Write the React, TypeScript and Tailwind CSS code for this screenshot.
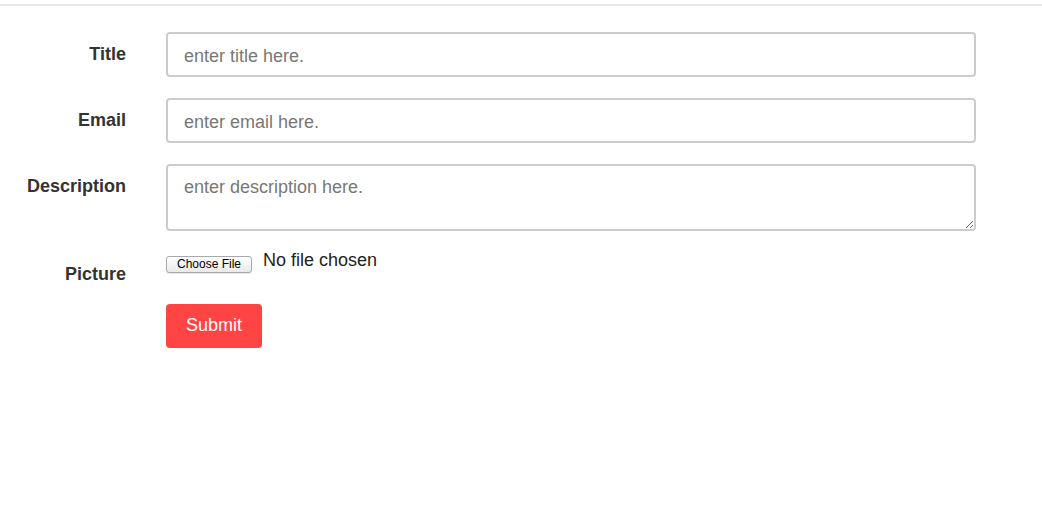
import React from 'react';

function Label({ children }: { children: React.ReactNode }) {
  return (
    <label className="pt-[10px] text-right text-[18px] leading-[1.42857] font-bold text-[#333]">
      {children}
    </label>
  );
}

export default function App() {
  return (
    <div className="min-h-[514px] bg-white font-['Liberation_Sans',Arial,sans-serif]">
      <div className="pt-[4px]">
        <div className="border-t-2 border-[#e7e7e7]" />
      </div>
      <form className="grid grid-cols-[126px_810px] gap-x-[40px] gap-y-[21px] pt-[26px]">
        <Label>Title</Label>
        <input
          type="text"
          placeholder="enter title here."
          className="h-[45px] rounded-[4px] border-2 border-[#cccccc] pl-[16px] pt-[3px] text-[18px] text-[#333] placeholder:text-[#777] outline-none"
        />

        <Label>Email</Label>
        <input
          type="email"
          placeholder="enter email here."
          className="h-[45px] rounded-[4px] border-2 border-[#cccccc] pl-[16px] pt-[3px] text-[18px] text-[#333] placeholder:text-[#777] outline-none"
        />

        <Label>Description</Label>
        <textarea
          placeholder="enter description here."
          className="block h-[67px] resize-y rounded-[4px] border-2 border-[#cccccc] px-[16px] pt-[9px] text-[18px] leading-[1.42857] text-[#333] placeholder:text-[#777] outline-none"
        />

        <Label>Picture</Label>
        <div className="flex items-start gap-[11px] pt-[4px]">
          <button
            type="button"
            className="h-[17px] w-[86px] rounded-[3px] border border-[#a9a9a9] bg-gradient-to-b from-white to-[#e9e9e9] text-[12px] leading-[15px] text-black shadow-[0_1px_1px_rgba(0,0,0,0.1)]"
          >
            Choose File
          </button>
          <span className="-mt-[9px] text-[18px] leading-[26px] text-[#222]">No file chosen</span>
        </div>

        <div />
        <div className="-mt-[5px]">
          <button
            type="submit"
            className="h-[44px] w-[96px] rounded-[4px] bg-[#ff4444] text-[18px] text-white"
          >
            Submit
          </button>
        </div>
      </form>
    </div>
  );
}
